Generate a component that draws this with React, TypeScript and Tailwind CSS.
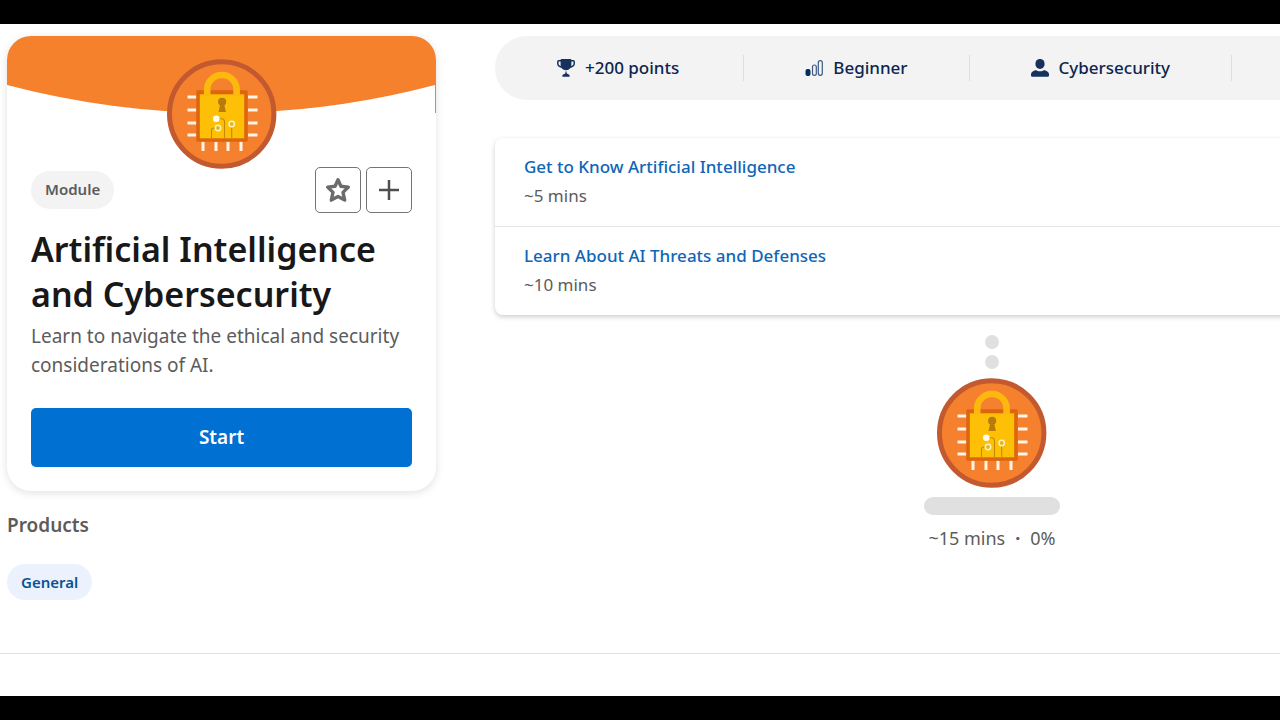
import type { ReactNode } from "react";

const pinRows = [38, 51, 64, 76];
const pinColumns = [36, 49, 61, 74];

function ModuleBadge() {
  return (
    <svg viewBox="0 0 110 110" className="size-[110px] shrink-0" role="img" aria-label="Padlock on a chip">
      <circle cx="54.7" cy="55" r="52.2" fill="#f5802d" stroke="#c3592f" strokeWidth="5" />
      <g stroke="#fff4e6" strokeWidth="3">
        {pinRows.map((y) => (
          <path key={y} d={`M20.5 ${y}H29.5M81 ${y}H90.5`} />
        ))}
        {pinColumns.map((x) => (
          <path key={x} d={`M${x} 82.5V92`} />
        ))}
      </g>
      <rect x="29.3" y="31.3" width="51.4" height="51.5" rx="1.5" fill="#dc650d" />
      <rect x="32.8" y="35.3" width="44.4" height="44" fill="#fdc006" />
      <path d="M40.2 37V30.5a14.7 14.5 0 0 1 29.4 0V37" fill="none" stroke="#fcb80d" strokeWidth="6.6" />
      <circle cx="55.1" cy="42.8" r="4.1" fill="#b57c0c" />
      <path d="M53.4 44h3.5l2 9h-7.4z" fill="#b57c0c" />
      <g fill="none" stroke="#c08a0b" strokeWidth="1.1">
        <path d="M50 59.7h4.5q3 0 3 3V79.3" />
        <path d="M48.5 69h-1.5q-2.5 0-2.5 2.5V79.3" />
        <path d="M64.7 68V79.3" />
      </g>
      <circle cx="49.3" cy="59.8" r="3.3" fill="#fffdf2" />
      <circle cx="51" cy="69" r="2.7" fill="#e0b52a" stroke="#fff3b8" strokeWidth="1.5" />
      <circle cx="64.7" cy="65" r="2.7" fill="#e0b52a" stroke="#fff3b8" strokeWidth="1.5" />
    </svg>
  );
}

function TrophyIcon() {
  return (
    <svg viewBox="0 0 18 18" className="size-[18px]" aria-hidden="true">
      <g fill="none" stroke="#16325c" strokeWidth="1.5">
        <path d="M4.5 1.8H1.6q-.8 0-.8.9v2q0 2.8 4.8 3.5" />
        <path d="M13.5 1.8h2.9q.8 0 .8.9v2q0 2.8-4.8 3.5" />
      </g>
      <path d="M3.6.8q0-.8.8-.8h9.2q.8 0 .8.8v4.7q0 5.2-5.4 5.7-5.4-.5-5.4-5.7z" fill="#16325c" />
      <path d="M9 11.5l.8 3 2 .9q.8.4.8 1.1v1.2H5.4v-1.2q0-.7.8-1.1l2-.9z" fill="#16325c" />
    </svg>
  );
}

function LevelIcon() {
  return (
    <svg viewBox="0 0 18 18" className="size-[18px]" aria-hidden="true">
      <rect x="0.5" y="10" width="5" height="7" rx="2" fill="#032d60" />
      <rect x="7.5" y="6" width="3.8" height="10.3" rx="1.9" fill="none" stroke="#3c5a84" strokeWidth="1.2" />
      <rect x="13.3" y="1.6" width="4" height="14.7" rx="2" fill="none" stroke="#3c5a84" strokeWidth="1.2" />
    </svg>
  );
}

function PersonIcon() {
  return (
    <svg viewBox="0 0 18 18" className="size-[18px]" aria-hidden="true">
      <ellipse cx="9" cy="4.9" rx="4.6" ry="5" fill="#16325c" />
      <path d="M0 16.5v-1.3q0-2.5 4.3-3.9.8-.3 1.5.1 3.2 1.7 6.4 0 .7-.4 1.5-.1 4.3 1.4 4.3 3.9v1.3q0 1.300-1.300 1.300H1.300Q0 17.800 0 16.500z" fill="#16325c" />
    </svg>
  );
}

function Fact({ icon, children }: { icon?: ReactNode; children?: ReactNode }) {
  return (
    <li className="flex h-[26px] items-center gap-[10px] border-r border-[#dfdfdf] px-[61px] text-[17px] font-medium text-[#0b2550] first:pl-[62px] first:pr-16">
      {icon}
      {children}
    </li>
  );
}

function Unit({ title, time }: { title: string; time: string }) {
  return (
    <li className="border-b border-[#e5e5e5] px-[29px] pt-[14px] pb-4 last:border-b-0">
      <a href="#" className="block text-[17px] leading-[29px] font-medium text-[#0f66b8]">
        {title}
      </a>
      <p className="text-[17px] leading-[29px] text-[#5c5c5c]">{time}</p>
    </li>
  );
}

const iconButton = "flex size-[46px] items-center justify-center rounded-[5px] border border-[#747474] bg-white text-[#5c5c5c]";

export default function App() {
  return (
    <div className="flex min-h-screen flex-col overflow-hidden bg-white font-['Noto_Sans',sans-serif] text-[#5c5c5c]">
      <div className="h-6 bg-black" />

      <main className="flex flex-1 gap-[59px] pt-3 pl-[7px]">
        <aside className="w-[429px] shrink-0">
          <section className="overflow-hidden rounded-3xl bg-white shadow-[0_2px_8px_rgba(0,0,0,0.12)]">
            <div className="relative h-[77px]">
              <svg viewBox="0 0 429 77" preserveAspectRatio="none" className="h-[77px] w-full" aria-hidden="true">
                <path d="M0 0H429V77H428V49Q214.5 105 0 49Z" fill="#f5812d" />
              </svg>
              <div className="absolute inset-x-0 top-[23px] flex justify-center">
                <ModuleBadge />
              </div>
            </div>

            <div className="px-6 pt-[54px] pb-6">
              <div className="flex items-center justify-between">
                <span className="rounded-full bg-[#f3f3f3] px-[14px] pt-2 pb-[10px] text-[15px] leading-5 font-semibold">
                  Module
                </span>
                <div className="flex gap-[5px]">
                  <button type="button" aria-label="Add to favorites" className={iconButton}>
                    <svg viewBox="0 0 24 24" className="size-6" fill="none" stroke="#6b6b6b" strokeWidth="3.4" strokeLinejoin="round" aria-hidden="true">
                      <path d="M12 1.8l2.9 6.4 7.4.9-5.3 5.3 1.7 7.7L12 18.5l-6.7 3.6 1.7-7.7L1.7 9.1l7.4-.9z" />
                    </svg>
                  </button>
                  <button type="button" aria-label="Add to trailmix" className={iconButton}>
                    <svg viewBox="0 0 24 24" className="size-6" fill="none" stroke="#4f4f4f" strokeWidth="2.5" aria-hidden="true">
                      <path d="M12 2v20M2 12h20" />
                    </svg>
                  </button>
                </div>
              </div>

              <h1 className="mt-[14px] text-[34px] leading-[45px] font-semibold text-[#181818]">
                Artificial Intelligence and Cybersecurity
              </h1>
              <p className="mt-[5px] text-[19px] leading-[29px]">
                Learn to navigate the ethical and security considerations of AI.
              </p>
              <button type="button" className="mt-7 h-[59px] w-full rounded-[5px] bg-[#0070d2] text-[19px] font-semibold text-white">
                Start
              </button>
            </div>
          </section>

          <h2 className="mt-5 text-[19px] leading-7 font-semibold">Products</h2>
          <a href="#" className="mt-[25px] inline-block rounded-full bg-[#ebf2fe] px-[14px] py-2 text-[15px] leading-5 font-semibold text-[#0b5293]">
            General
          </a>
        </aside>

        <div className="min-w-[994px] flex-1">
          <ul className="flex h-16 items-center rounded-full bg-[#f3f3f3]">
            <Fact icon={<TrophyIcon />}>+200 points</Fact>
            <Fact icon={<LevelIcon />}>Beginner</Fact>
            <Fact icon={<PersonIcon />}>Cybersecurity</Fact>
          </ul>

          <ul className="mt-[38px] rounded-lg bg-white shadow-[0_2px_5px_rgba(0,0,0,0.2)]">
            <Unit title="Get to Know Artificial Intelligence" time="~5 mins" />
            <Unit title="Learn About AI Threats and Defenses" time="~10 mins" />
          </ul>

          <div className="mt-5 flex flex-col items-center">
            <span className="size-[14px] rounded-full bg-[#e0e0e0]" />
            <span className="mt-[6px] size-[14px] rounded-full bg-[#e0e0e0]" />
            <div className="mt-[9px]">
              <ModuleBadge />
            </div>
            <div role="progressbar" aria-label="Module progress" aria-valuenow={0} aria-valuemin={0} aria-valuemax={100} className="mt-[9px] h-[18px] w-[136px] rounded-full bg-[#e0e0e0]" />
            <p className="mt-[9px] flex gap-[10px] text-[18px] leading-7">
              <span>~15 mins</span>
              <span className="font-bold">·</span>
              <span>0%</span>
            </p>
          </div>
        </div>
      </main>

      <footer className="border-t border-[#e2e2e2]">
        <div className="h-[42px]" />
        <div className="h-6 bg-black" />
      </footer>
    </div>
  );
}
